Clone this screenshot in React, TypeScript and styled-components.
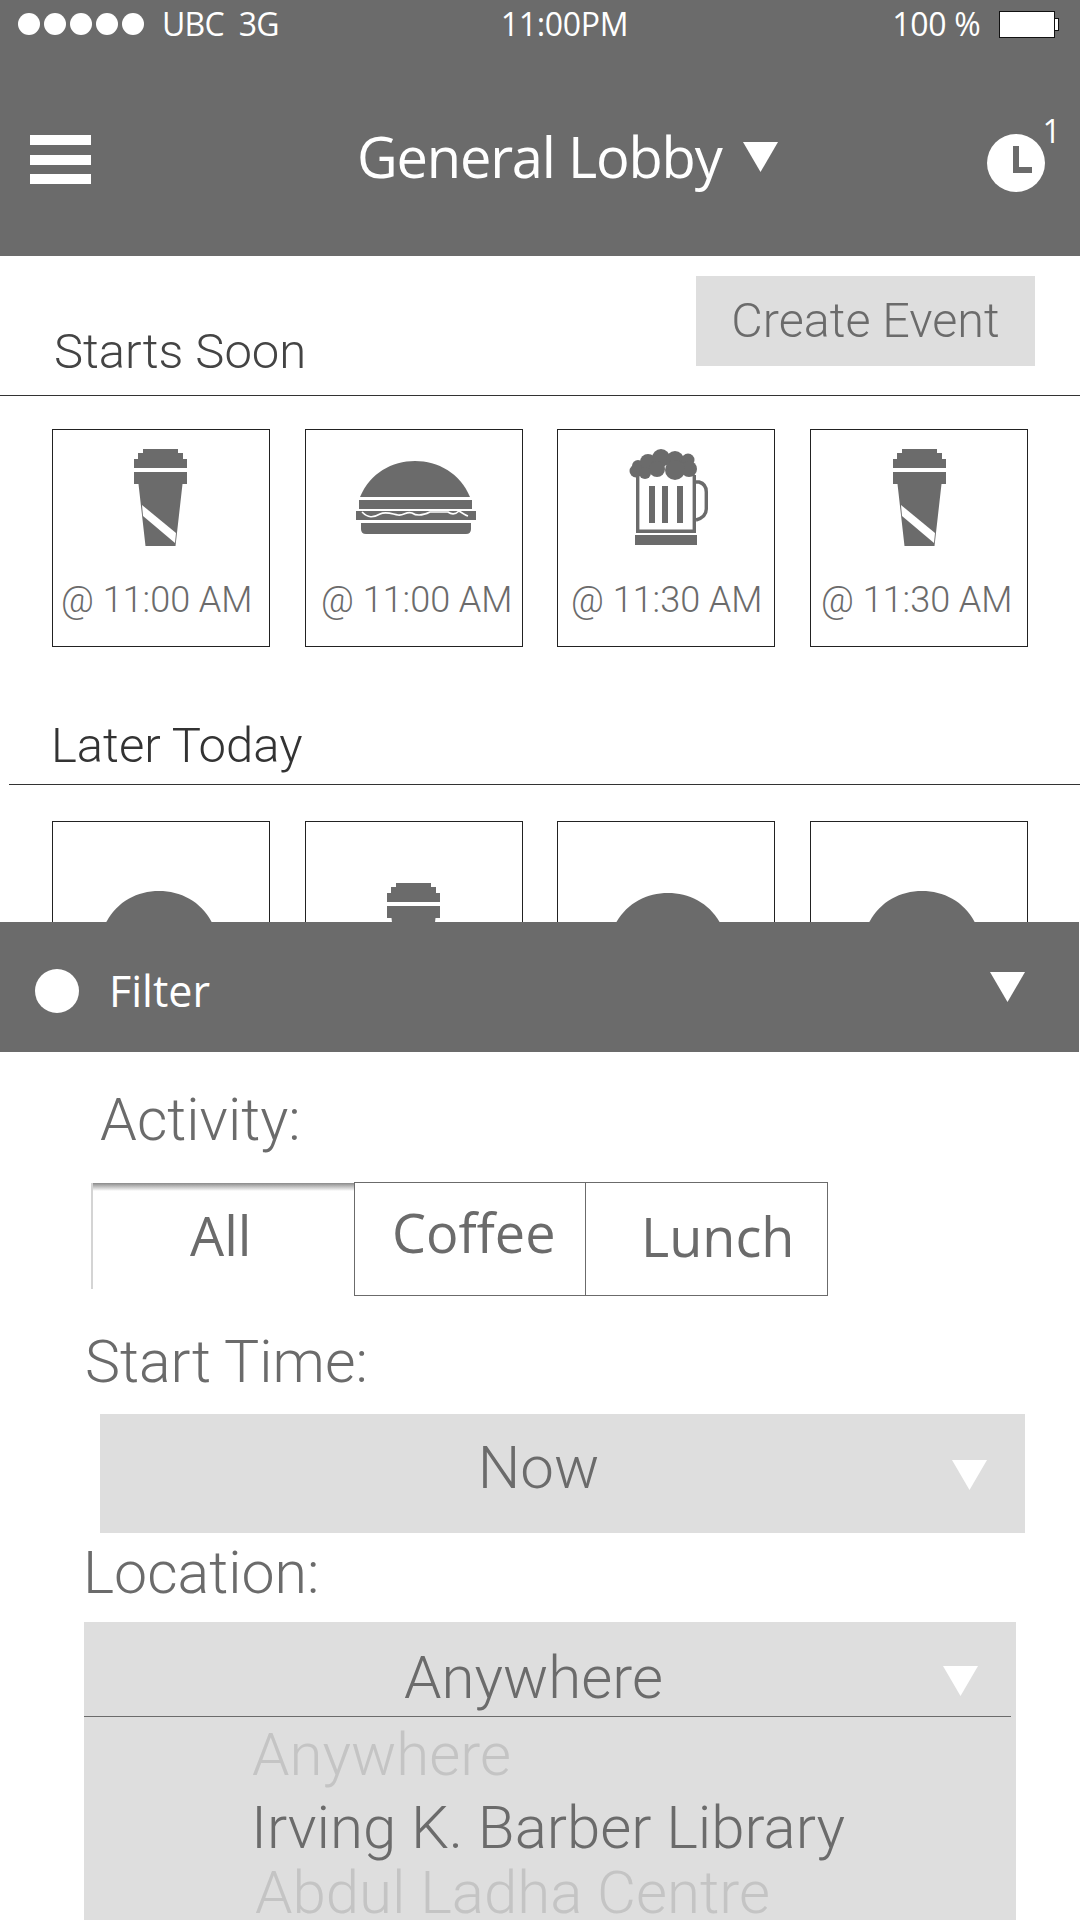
import React, { ReactElement } from 'react';
import styled, { createGlobalStyle } from 'styled-components';

const GlobalStyle = createGlobalStyle`
  html, body {
    margin: 0;
    padding: 0;
    background: #fff;
  }
`;

const GREY = '#6b6b6b';
const PANEL = '#dedede';
const HELV = 'Roboto, "Liberation Sans", Arial, sans-serif';
const HUMAN = '"Open Sans", "Noto Sans", sans-serif';

const CupIcon = (): ReactElement => (
  <svg width="53" height="97" viewBox="0 0 53 97">
    <path
      fill={GREY}
      d="M9 0H44V4H49V10H53V19H0V10H4V4H9ZM0 23H53V35H48.5L41.5 97H11.5L4.5 35H0Z"
    />
    <path fill="#fff" d="M8 56L42 84L41 94L9 67Z" />
  </svg>
);

const BurgerIcon = (): ReactElement => (
  <svg width="120" height="73" viewBox="0 0 120 73">
    <path fill={GREY} d="M4 36C14 12 36 0 59 0C82 0 104 12 114 36Z" />
    <rect fill={GREY} x="3" y="39" width="113" height="9" />
    <rect fill={GREY} x="0" y="50" width="120" height="9" />
    <path fill={GREY} d="M5 62H115V68Q115 73 110 73H10Q5 73 5 68Z" />
    <path
      fill="none"
      stroke="#fff"
      strokeWidth="1.6"
      d="M6 51C12 57 17 57 24 53C30 50 36 53 42 54C48 55 50 50 56 52C62 56 68 54 74 51H92C96 54 100 53 103 50C106 52 109 54 112 55"
    />
  </svg>
);

const BeerIcon = (): ReactElement => (
  <svg width="79" height="96" viewBox="0 0 79 96">
    <g fill={GREY}>
      <circle cx="7" cy="22" r="6.5" />
      <circle cx="9" cy="17" r="6" />
      <circle cx="19" cy="13" r="8" />
      <circle cx="32" cy="9" r="9" />
      <circle cx="46" cy="11" r="9" />
      <circle cx="59" cy="11" r="6.5" />
      <circle cx="60" cy="20" r="8" />
      <circle cx="46" cy="21" r="10" />
      <circle cx="28" cy="20" r="8" />
      <circle cx="16" cy="24" r="6" />
      <rect x="20" y="37" width="6" height="37" />
      <rect x="33" y="37" width="6" height="37" />
      <rect x="48" y="37" width="6" height="37" />
      <rect x="6" y="86" width="62" height="10" />
    </g>
    <path fill="none" stroke={GREY} strokeWidth="3.4" d="M8.7 26V82.3H65.3V26" />
    <path fill="none" stroke={GREY} strokeWidth="3.4" d="M67 33H70Q77.3 35 77.3 43V60Q77.3 68 67 71" />
  </svg>
);

const ClockIcon = (): ReactElement => (
  <svg width="58" height="58" viewBox="0 0 58 58">
    <circle cx="29" cy="29" r="29" fill="#fff" />
    <path fill={GREY} d="M26 12H32V33H45V39H26Z" />
  </svg>
);

const Triangle = (): ReactElement => (
  <svg width="35" height="30" viewBox="0 0 35 30">
    <path fill="#fff" d="M0 0H35L17.5 30Z" />
  </svg>
);

const icons = {
  cup: <CupIcon />,
  burger: <BurgerIcon />,
  beer: <BeerIcon />,
};

type IconName = keyof typeof icons;

const startsSoon: { icon: IconName; time: string; top: number; shift: number; left: number }[] = [
  { icon: 'cup', time: '@ 11:00 AM', top: 19, shift: -1, left: 8 },
  { icon: 'burger', time: '@ 11:00 AM', top: 31, shift: 4, left: 15 },
  { icon: 'beer', time: '@ 11:30 AM', top: 19, shift: 5, left: 13 },
  { icon: 'cup', time: '@ 11:30 AM', top: 19, shift: 0, left: 10 },
];

const laterToday: { icon: IconName; top: number; shift: number }[] = [
  { icon: 'burger', top: 69, shift: -2 },
  { icon: 'cup', top: 61, shift: -2 },
  { icon: 'burger', top: 71, shift: 6 },
  { icon: 'burger', top: 69, shift: 7 },
];

const App: React.FC = (): ReactElement => (
  <Page>
    <GlobalStyle />
    <Header>
      <StatusBar>
        <Dots>
          {[0, 1, 2, 3, 4].map((dot) => <Dot key={dot} />)}
        </Dots>
        <StatusText $left={18} $tracking={-0.8}>UBC&nbsp;&nbsp;3G</StatusText>
        <StatusText $left={222} $tracking={-0.3}>11:00PM</StatusText>
        <StatusText $left={264} $tracking={-0.3}>100 %</StatusText>
        <Battery />
        <BatteryNub />
      </StatusBar>
      <NavBar>
        <Burger>
          <span />
          <span />
          <span />
        </Burger>
        <Title>General Lobby</Title>
        <TitleArrow>
          <Triangle />
        </TitleArrow>
        <ClockWrap>
          <ClockIcon />
          <ClockBadge>1</ClockBadge>
        </ClockWrap>
      </NavBar>
    </Header>

    <SoonHead>
      <SectionTitle>Starts Soon</SectionTitle>
      <CreateButton type="button">Create Event</CreateButton>
    </SoonHead>
    <SoonCards>
      {startsSoon.map(({ icon, time, top, shift, left }, index) => (
        <Card key={index} $index={index}>
          <IconSlot $top={top} $shift={shift}>{icons[icon]}</IconSlot>
          <CardTime $left={left}>{time}</CardTime>
        </Card>
      ))}
    </SoonCards>

    <LaterHead>
      <LaterTitle>Later Today</LaterTitle>
    </LaterHead>
    <LaterCards>
      {laterToday.map(({ icon, top, shift }, index) => (
        <Card key={index} $index={index}>
          <IconSlot $top={top} $shift={shift}>{icons[icon]}</IconSlot>
        </Card>
      ))}
    </LaterCards>

    <FilterBar>
      <FilterDot />
      <FilterLabel>Filter</FilterLabel>
      <FilterArrow>
        <Triangle />
      </FilterArrow>
    </FilterBar>

    <FilterBody>
      <ActivityLabel>Activity:</ActivityLabel>
      <Segments>
        <ActiveSegment>All</ActiveSegment>
        <CoffeeSegment>Coffee</CoffeeSegment>
        <LunchSegment>Lunch</LunchSegment>
      </Segments>
      <TimeLabel>Start Time:</TimeLabel>
      <TimeSelect>
        <SelectValue>Now</SelectValue>
        <SelectArrow $right={38} $down={-14}>
          <Triangle />
        </SelectArrow>
      </TimeSelect>
      <LocationLabel>Location:</LocationLabel>
      <LocationSelect>
        <LocationValue>
          <SelectValue>Anywhere</SelectValue>
          <SelectArrow $right={33} $down={-3}>
            <Triangle />
          </SelectArrow>
        </LocationValue>
        <OptionList>
          <Option $faded $left={168} $top={0}>Anywhere</Option>
          <Option $left={167} $top={4}>Irving K. Barber Library</Option>
          <Option $faded $left={171} $top={-4}>Abdul Ladha Centre</Option>
        </OptionList>
      </LocationSelect>
    </FilterBody>
  </Page>
);

const Page = styled.div`
  width: 1080px;
  height: 1920px;
  overflow: hidden;
  background: #fff;
  display: flex;
  flex-direction: column;
`;

const Header = styled.header`
  height: 256px;
  background: ${GREY};
  color: #fff;
  font-family: ${HUMAN};
  flex: none;
`;

const StatusBar = styled.div`
  height: 48px;
  padding-left: 18px;
  display: flex;
  align-items: center;
`;

const Dots = styled.div`
  display: flex;
  gap: 4px;
`;

const Dot = styled.span`
  width: 22px;
  height: 22px;
  border-radius: 50%;
  background: #fff;
`;

const StatusText = styled.span<{ $left: number; $tracking: number }>`
  margin-left: ${({ $left }) => $left}px;
  font-size: 32px;
  letter-spacing: ${({ $tracking }) => $tracking}px;
  line-height: 48px;
  white-space: nowrap;
`;

const Battery = styled.span`
  width: 56px;
  height: 27px;
  margin-left: 19px;
  box-sizing: border-box;
  background: #fff;
  border: 1px solid #111;
`;

const BatteryNub = styled.span`
  width: 4px;
  height: 13px;
  background: #fff;
  border: 1px solid #111;
  border-left: 0;
  box-sizing: border-box;
`;

const NavBar = styled.div`
  height: 208px;
  padding: 0 0 44px 30px;
  box-sizing: border-box;
  display: flex;
  align-items: flex-end;
`;

const Burger = styled.div`
  width: 61px;
  height: 49px;
  margin-bottom: 28px;
  display: flex;
  flex-direction: column;
  justify-content: space-between;

  span {
    height: 10px;
    background: #fff;
  }
`;

const Title = styled.div`
  margin-left: 266px;
  margin-bottom: 18px;
  font-size: 56px;
  letter-spacing: -1.2px;
  line-height: 76px;
  white-space: nowrap;
`;

const TitleArrow = styled.div`
  margin-left: 21px;
  margin-bottom: 40px;
  display: flex;
`;

const ClockWrap = styled.div`
  position: relative;
  margin-left: 209px;
  margin-bottom: 20px;
  display: flex;
`;

const ClockBadge = styled.span`
  position: absolute;
  left: 56px;
  top: -22px;
  font-size: 32px;
  line-height: 38px;
`;

const SoonHead = styled.div`
  height: 140px;
  box-sizing: border-box;
  flex: none;
  padding: 20px 45px 0 54px;
  border-bottom: 1px solid #333;
  display: flex;
  justify-content: space-between;
  align-items: flex-start;
`;

const SectionTitle = styled.h2`
  margin: 46px 0 0;
  font: 300 49px/60px ${HELV};
  color: #444;
`;

const LaterTitle = styled(SectionTitle)`
  margin: 0 0 0 -1px;
  color: #333;
`;

const CreateButton = styled.button`
  width: 339px;
  height: 90px;
  padding: 0;
  border: 0;
  background: ${PANEL};
  color: ${GREY};
  font: 300 48.5px/88px ${HELV};
`;

const SoonCards = styled.div`
  height: 251px;
  padding: 33px 0 0 52px;
  box-sizing: border-box;
  flex: none;
  display: flex;
`;

const LaterHead = styled.div`
  height: 138px;
  margin-left: 9px;
  padding: 0 0 8px 43px;
  box-sizing: border-box;
  flex: none;
  border-bottom: 1px solid #333;
  display: flex;
  align-items: flex-end;
`;

const LaterCards = styled.div`
  height: 137px;
  padding: 36px 0 0 52px;
  box-sizing: border-box;
  flex: none;
  overflow: hidden;
  display: flex;
`;

const Card = styled.div<{ $index: number }>`
  width: 218px;
  height: 218px;
  margin-left: ${({ $index }) => ($index === 0 ? 0 : $index === 1 ? 35 : $index === 2 ? 34 : 35)}px;
  box-sizing: border-box;
  border: 1px solid #222;
  flex: none;
  display: flex;
  flex-direction: column;
`;

const IconSlot = styled.div<{ $top: number; $shift: number }>`
  height: 148px;
  box-sizing: border-box;
  padding-top: ${({ $top }) => $top}px;
  margin-left: ${({ $shift }) => $shift}px;
  display: flex;
  justify-content: center;
  align-items: flex-start;
`;

const CardTime = styled.div<{ $left: number }>`
  padding-left: ${({ $left }) => $left}px;
  font: 300 36px/44px ${HELV};
  color: ${GREY};
  white-space: nowrap;
`;

const FilterBar = styled.div`
  width: 1079px;
  height: 130px;
  padding: 7px 0 0 35px;
  box-sizing: border-box;
  flex: none;
  background: ${GREY};
  color: #fff;
  display: flex;
  align-items: center;
`;

const FilterDot = styled.span`
  width: 44px;
  height: 44px;
  border-radius: 50%;
  background: #fff;
`;

const FilterLabel = styled.span`
  margin-left: 30px;
  font: 400 43px/60px ${HUMAN};
`;

const FilterArrow = styled.span`
  margin-left: auto;
  margin-right: 54px;
  margin-bottom: 8px;
  display: flex;
`;

const FilterBody = styled.div`
  flex: none;
  display: flex;
  flex-direction: column;
  align-items: flex-start;
  color: ${GREY};
`;

const FieldLabel = styled.div`
  font: 300 59px/66px ${HELV};
  white-space: nowrap;
`;

const ActivityLabel = styled(FieldLabel)`
  margin: 35px 0 0 100px;
`;

const TimeLabel = styled(FieldLabel)`
  margin: 33px 0 0 85px;
`;

const LocationLabel = styled(FieldLabel)`
  margin: 7px 0 0 83px;
`;

const Segments = styled.div`
  margin: 29px 0 0 91px;
  height: 114px;
  display: flex;
  font: 500 54px/110px ${HUMAN};
`;

const ActiveSegment = styled.div`
  width: 263px;
  height: 106px;
  box-sizing: border-box;
  padding-left: 97px;
  background: linear-gradient(#8a8a8a, #fff 8px);
  border-left: 2px solid #d4d4d4;
  margin-top: 1px;
  line-height: 104px;
`;

const Segment = styled.div`
  height: 114px;
  box-sizing: border-box;
  border: 1px solid ${GREY};
`;

const CoffeeSegment = styled(Segment)`
  width: 232px;
  padding-left: 37px;
  line-height: 98px;
`;

const LunchSegment = styled(Segment)`
  width: 243px;
  margin-left: -1px;
  padding-left: 55px;
  line-height: 106px;
`;

const SelectBox = styled.div`
  background: ${PANEL};
  box-sizing: border-box;
`;

const TimeSelect = styled(SelectBox)`
  position: relative;
  width: 925px;
  height: 119px;
  margin: 19px 0 0 100px;
  display: flex;
  align-items: center;
  justify-content: center;
  padding: 0 48px 12px 0;
`;

const SelectValue = styled.span`
  font: 300 60px/66px ${HELV};
  white-space: nowrap;
`;

const SelectArrow = styled.span<{ $right: number; $down: number }>`
  position: absolute;
  right: ${({ $right }) => $right}px;
  top: 50%;
  transform: translateY(${({ $down }) => $down}px);
  display: flex;
`;

const LocationSelect = styled(SelectBox)`
  width: 932px;
  height: 298px;
  margin: 16px 0 0 84px;
`;

const LocationValue = styled.div`
  position: relative;
  width: 927px;
  height: 95px;
  box-sizing: border-box;
  padding: 17px 28px 0 0;
  border-bottom: 1px solid ${GREY};
  display: flex;
  align-items: center;
  justify-content: center;
`;

const OptionList = styled.div`
  display: flex;
  flex-direction: column;
  gap: 15px;
  padding-top: 11px;
`;

const Option = styled.div<{ $faded?: boolean; $left: number; $top: number }>`
  height: 54px;
  margin-top: ${({ $top }) => $top}px;
  padding-left: ${({ $left }) => $left}px;
  font: 300 60px/54px ${HELV};
  color: ${({ $faded }) => ($faded ? '#c4c4c4' : GREY)};
  white-space: nowrap;
`;

export default App;
